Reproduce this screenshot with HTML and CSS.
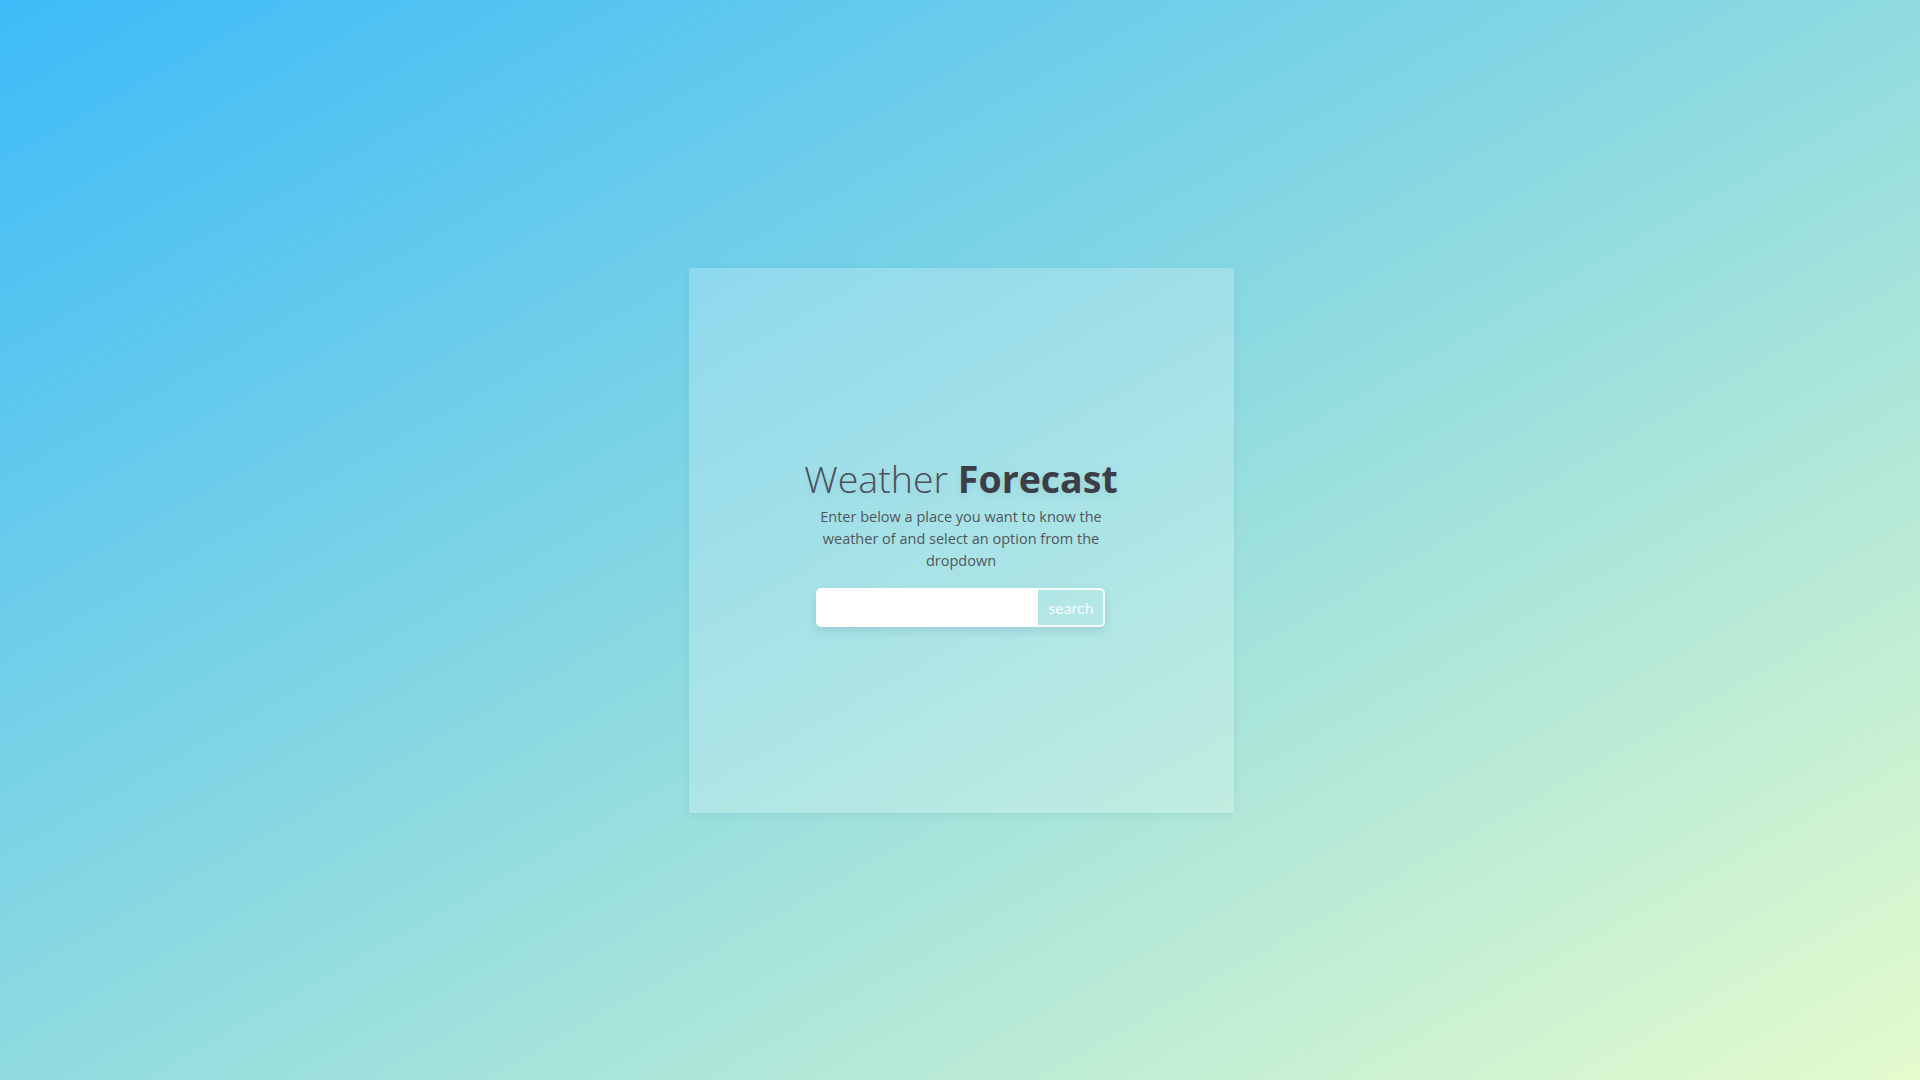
FILE: index.html
```html
<!DOCTYPE html>
<html lang="en">
<head>
<meta charset="utf-8">
<title>Weather Forecast</title>
<link rel="stylesheet" href="styles.css">
</head>
<body>
<main class="page">
  <section class="card">
    <div class="content">
      <h1 class="title"><span class="light">Weather</span> <span class="bold">Forecast</span></h1>
      <p class="subtitle">Enter below a place you want to know the weather of and select an option from the dropdown</p>
      <form class="search">
        <input class="search-input" type="text" aria-label="place">
        <button class="search-btn" type="button">search</button>
      </form>
    </div>
  </section>
</main>
</body>
</html>
```
FILE: styles.css
```css
* { box-sizing: border-box; }
html, body { margin: 0; padding: 0; height: 100%; }
body {
  font-family: "Open Sans", "Noto Sans", sans-serif;
  background: linear-gradient(to bottom right, #3dbbf8 0%, #8fdbe0 50%, #e4fbcc 100%);
  background-attachment: fixed;
}
.page {
  height: 100vh;
  display: flex;
  align-items: center;
  justify-content: center;
  padding-left: 2px;
  padding-top: 1px;
}
.card {
  width: 545px;
  height: 545px;
  border-radius: 3px;
  background: rgba(255, 255, 255, 0.22);
  box-shadow: 0 2px 10px rgba(0, 80, 120, 0.08);
  display: flex;
  align-items: center;
  justify-content: center;
}
.content {
  display: flex;
  flex-direction: column;
  align-items: center;
  text-align: center;
  padding-top: 2px;
}
.title {
  margin: 0;
  font-size: 37.5px;
  line-height: 46px;
  color: #3b3e46;
  text-shadow: 0 3px 8px rgba(0, 0, 0, 0.08);
}
.light { font-weight: 300; color: #4b5059; }
.bold { font-weight: 700; }
.subtitle {
  margin: 4px 0 0;
  width: 300px;
  font-size: 14.5px;
  line-height: 22px;
  color: #51565d;
}
.search {
  margin: 16px 0 0;
  display: flex;
  width: 289px;
  height: 39px;
  box-shadow: 0 4px 10px rgba(0, 60, 90, 0.12);
  border-radius: 5px;
}
.search-input {
  flex: 1;
  border: none;
  border-radius: 5px 0 0 5px;
  background: #fff;
  outline: none;
  font: inherit;
  padding: 0 10px;
}
.search-btn {
  width: 69px;
  border: 2px solid rgba(255, 255, 255, 0.85);
  border-left: none;
  border-radius: 0 5px 5px 0;
  background: rgba(255, 255, 255, 0.05);
  color: rgba(255, 255, 255, 0.9);
  font-family: "Lato", "Open Sans", sans-serif;
  font-size: 16px;
  padding: 0;
}
```
